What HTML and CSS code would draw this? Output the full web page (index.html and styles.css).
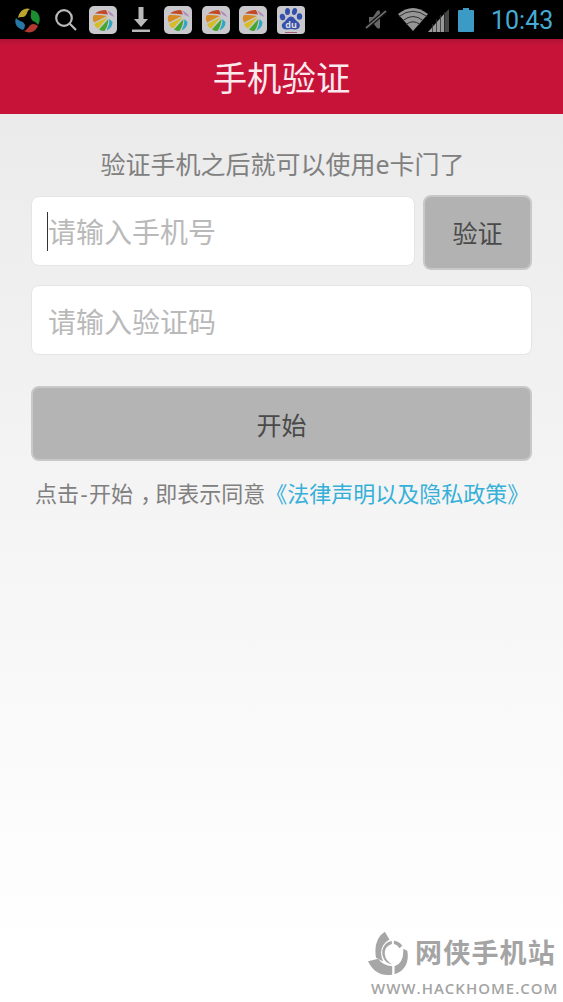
FILE: index.html
```html
<!DOCTYPE html>
<html lang="zh-CN">
<head>
<meta charset="utf-8">
<title>手机验证</title>
<link rel="stylesheet" href="styles.css">
</head>
<body>
<svg class="defs" width="0" height="0" aria-hidden="true">
  <symbol id="ball" viewBox="0 0 28 28">
    <rect width="28" height="28" rx="5" fill="#c9c8cc"/>
    <path d="M6 7.500Q10 4 17 4L19 8.500Q12 7.500 6 7.500Z" fill="#c34824"/>
    <path d="M5 9Q11 8.500 18 10L5 16.500Q2.500 12 5 9Z" fill="#d78b25"/>
    <path d="M5 18L19 11L9 22.500Q6 21 5 18Z" fill="#d5bd26"/>
    <path d="M10 23.500L19.500 13Q19 20 15.500 25Q12.500 25 10 23.500Z" fill="#45a52c"/>
    <path d="M17.500 24.500Q20.500 19 20.500 13L23.500 16Q23.500 22 17.500 24.500Z" fill="#30a7c4"/>
    <path d="M18 4.500Q23 6 25.500 11L21 9Z" fill="#b48abb"/>
  </symbol>
</svg>
<header class="status">
  <svg class="swirl" viewBox="0 0 28 28">
    <path d="M4 12C5 5 11 1 16 3C12 5 14 10 9 11C6 11 5 11 4 12Z" fill="#bba52d"/>
    <path d="M17 4C25 4 28 13 24 19C22 15 18 16 17 12C16 9 18 7 17 4Z" fill="#1d8d32"/>
    <path d="M24 20C20 28 14 27 10 25C15 23 14 19 19 18Q22 18 24 20Z" fill="#b13931"/>
    <path d="M9 24C2 22 0 16 2 12C5 16 9 14 11 19Q11 22 9 24Z" fill="#2778a6"/>
  </svg>
  <svg class="search" viewBox="0 0 24 24"><circle cx="10" cy="10" r="7.800"/><path d="M15.800 15.800L22 22"/></svg>
  <svg class="app"><use href="#ball"/></svg>
  <svg class="download" viewBox="0 0 20 28"><path d="M7.500 1h5v12H17l-7 8-7-8h4.500Z"/><path d="M1 23.500h18v2.500H1Z"/></svg>
  <svg class="app"><use href="#ball"/></svg>
  <svg class="app"><use href="#ball"/></svg>
  <svg class="app"><use href="#ball"/></svg>
  <svg class="app" viewBox="0 0 28 28">
    <rect width="28" height="28" rx="4" fill="#c9c8cc"/>
    <g fill="#3450ad"><ellipse cx="5.500" cy="11" rx="2.700" ry="3.300" transform="rotate(-12 5.500 11)"/><ellipse cx="10.500" cy="5.500" rx="2.500" ry="3.500"/><ellipse cx="17.500" cy="5.500" rx="2.500" ry="3.500" transform="rotate(12 17.500 5.500)"/><ellipse cx="22.500" cy="10.500" rx="2.700" ry="3.300"/><path d="M14 10.500C17 10.500 18 14 21 16C25 19 22 24 18 23.500Q14 22.500 10 23.500C6 24 3 20 6 17C9 15 11 10.500 14 10.500Z"/></g>
    <text class="du" x="14" y="21.500" text-anchor="middle">du</text>
    <path d="M8 26.500h12" stroke="#a45a70"/>
  </svg>
  <span class="space"></span>
  <svg class="mute" viewBox="0 0 22 24"><path d="M4 9h4l4-6q3-2 3 1v15q0 3-3 1l-4-5H4Z" fill="#666"/><path d="M1 20L21 3" stroke="#111" stroke-width="4"/><path d="M1 20L21 3" stroke="#777" stroke-width="1.600"/></svg>
  <svg class="wifi" viewBox="0 0 32 25"><path d="M1 7Q16-5 31 7L16 24Z" fill="#969696"/><path d="M2 9.500Q16-1 30 9.500M6 13.500Q16 5.500 26 13.500M9 17.500Q16 12 23 17.500" fill="none" stroke="#303030" stroke-width="1"/></svg>
  <svg class="signal" viewBox="0 0 21 24"><path d="M0 24L16 6V24Z" fill="#999"/><path d="M17 5L21 1V24H17Z" fill="#454545"/><path d="M4.500 16V24M8.500 11V24M12.500 7V24M16.500 4V24" stroke="#333" stroke-width=".800"/></svg>
  <svg class="battery" viewBox="0 0 16 25"><path d="M1 3h4V1h6v2h4q1 0 1 1v20q0 1-1 1H1q-1 0-1-1V4q0-1 1-1Z" fill="#3b9bc5"/></svg>
  <time class="clock">10:43</time>
</header>
<h1 class="title">手机验证</h1>
<main class="page">
  <p class="intro">验证手机之后就可以使用e卡门了</p>
  <div class="phone-row">
    <div class="field phone"><span class="caret"></span>请输入手机号</div>
    <button class="button verify">验证</button>
  </div>
  <div class="field code">请输入验证码</div>
  <button class="button start">开始</button>
  <p class="terms">点击<span class="dash">-</span>开始<span class="comma">，</span>即表示同意<a class="link">《法律声明以及隐私政策》</a></p>
  <footer class="mark">
    <div class="brand">
      <svg class="logo" viewBox="18 13 122 134">
        <g fill="#a6a6a6">
          <path d="M68 15L82 38Q57 52 57 78Q57 92 63 104L42 93Q40 87 40 72Q40 32 68 15Z"/>
          <path d="M18 103L48 96Q62 116 90 118V143Q40 150 18 103Z"/>
          <path d="M97 118Q125 109 123 66L135 72Q144 124 97 142Z"/>
          <path d="M89 43Q76 44 68 55Q58 68 61 85Q67 109 91 113Q71 103 68 83Q66 59 89 52Z"/>
          <path d="M95 42Q111 44 120 57L112 64Q105 54 95 52Z"/>
        </g>
      </svg>
      <span class="name">网侠手机站</span>
    </div>
    <div class="site">WWW.HACKHOME.COM</div>
  </footer>
</main>
</body>
</html>
```
FILE: styles.css
```css
* { box-sizing: border-box; }
body {
  display: flex;
  flex-direction: column;
  height: 1002px;
  margin: 0;
  overflow: hidden;
  font-family: "Noto Sans", "Noto Sans CJK SC", sans-serif;
  color: #808080;
}
.defs { position: absolute; }
.status { display: flex; flex: none; align-items: center; height: 39px; padding: 0 9px 0 14px; background: #000; }
.status svg { flex: none; }
.swirl { width: 28px; height: 28px; }
.search { width: 24px; height: 24px; margin: 0 10px 0 12px; fill: none; stroke: #b9b9b9; stroke-width: 2.200; }
.app { width: 28px; height: 28px; margin: 0 9.500px 0 0; }
.search + .app { margin: 0 14px 0 1px; }
.download { width: 20px; height: 28px; margin-right: 13px; fill: #b9b9b9; }
.du { fill: #ddd; font: bold 9px "Open Sans", sans-serif; }
.space { flex: 1; }
.mute { width: 22px; height: 24px; }
.wifi { width: 32px; height: 25px; margin-left: 10px; }
.signal { width: 21px; height: 24px; margin-left: -1px; }
.battery { width: 16px; height: 25px; margin-left: 9px; }
.clock { width: 63px; margin-left: 17px; padding-top: 2px; font: 25px/37px Roboto, sans-serif; color: #45abd5; white-space: nowrap; }
.title {
  flex: none;
  height: 75px;
  margin: 0;
  background: linear-gradient(#b01335, #c81339 7px);
  color: #fbe9ed;
  font-size: 34.400px;
  font-weight: 400;
  line-height: 77px;
  text-align: center;
}
.page {
  display: flex;
  flex: 1;
  flex-direction: column;
  padding: 31px 31px 0;
  background: linear-gradient(#ebebeb, #fff 95%);
}
.intro { margin: 0 -1px 11px 1px; font-size: 25px; line-height: 39px; text-align: center; white-space: nowrap; }
.phone-row { display: flex; gap: 8px; height: 75px; align-items: flex-start; }
.field {
  display: flex;
  align-items: center;
  height: 70px;
  padding-left: 16px;
  border: 1px solid #e5e5e5;
  border-radius: 8px;
  background: #fff;
  color: #b9b9b9;
  font-size: 28px;
}
.phone { flex: 1; margin-top: 1px; padding-left: 15px; }
.caret { width: 1px; height: 39px; background: #333; }
.button {
  padding: 0;
  border: 2px solid #c8c8c8;
  border-radius: 8px;
  background: #b2b2b2;
  color: #4a4a4a;
  font: 25px "Noto Sans", "Noto Sans CJK SC", sans-serif;
}
.verify { width: 109px; height: 75px; padding-bottom: 2px; }
.code { margin-top: 15px; padding-top: 2px; }
.start { height: 75px; margin-top: 31px; background: #b4b4b4; }
.terms { margin: 15px 0 0 4px; font-size: 22px; line-height: 34px; white-space: nowrap; }
.dash { padding: 0 1.500px; }
.comma { padding: 0 4px 0 7px; font-feature-settings: "halt"; }
.link { color: #35b0d8; }
.mark { width: 195px; margin: auto -31px 2px auto; color: #a4a4a4; }
.brand { display: flex; align-items: center; height: 46px; }
.logo { width: 41px; height: 45px; margin-right: 6px; }
.name { font-size: 27px; font-weight: 700; line-height: 46px; letter-spacing: 1.200px; white-space: nowrap; }
.site { padding-left: 3px; font: 600 15px/24px "Open Sans", sans-serif; letter-spacing: 1px; white-space: nowrap; }
```
